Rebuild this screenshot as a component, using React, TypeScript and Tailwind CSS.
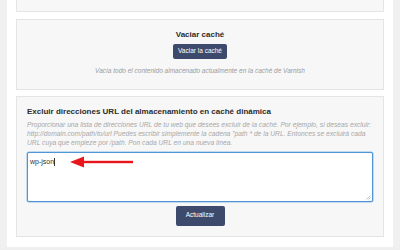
import React from "react";

const font = { fontFamily: '"Liberation Sans", Arial, sans-serif' };

function ArrowLeft() {
  return (
    <svg width="63" height="12" viewBox="0 0 63 12" className="shrink-0">
      <polygon points="0,6 14,0.5 14,11.5" fill="#e8161b" />
      <rect x="12" y="4.8" width="51" height="2.4" fill="#e8161b" />
    </svg>
  );
}

export default function App() {
  return (
    <div
      className="w-[400px] h-[250px] overflow-hidden bg-[#f0f0f1] px-[7px]"
      style={font}
    >
      <div className="bg-white px-[9px] pb-[10px] flex flex-col">
        {/* cut-off card above */}
        <div className="h-[12px] bg-[#f7f7f7] border border-t-0 border-[#e4e4e4]" />

        {/* Vaciar caché */}
        <div className="mt-[7px] h-[71px] bg-[#f7f7f7] border border-[#e4e4e4] flex flex-col items-center pt-[9px]">
          <h2 className="text-[8px] leading-[12px] font-bold text-[#2c2c2c]">Vaciar caché</h2>
          <button className="mt-[3px] h-[15px] px-[5px] rounded-[2px] bg-[#3e4a6b] text-white text-[6.5px] leading-none">
            Vaciar la caché
          </button>
          <p className="mt-[7px] text-[6.5px] italic text-[#9b9b9b]">
            Vacía todo el contenido almacenado actualmente en la caché de Varnish
          </p>
        </div>

        {/* Excluir direcciones */}
        <div className="mt-[6px] h-[141px] bg-[#f7f7f7] border border-[#e4e4e4] px-[10px] pt-[9px] flex flex-col">
          <h2 className="text-[8px] leading-[12px] font-bold text-[#2c2c2c]">
            Excluir direcciones URL del almacenamiento en caché dinámica
          </h2>
          <p className="mt-[2px] text-[6.7px] leading-[9.2px] italic text-[#a7a7a7] whitespace-nowrap">
            Proporcionar una lista de direcciones URL de tu web que desees excluir de la caché. Por ejemplo, si deseas excluir:
            <br />
            http://domain.com/path/to/url Puedes escribir simplemente la cadena "path * de la URL. Entonces se excluirá cada
            <br />
            URL cuya que empieze por /path. Pon cada URL en una nueva línea.
          </p>
          <div className="mt-[4px] h-[50px] bg-white border border-[#4f94d4] rounded-[2px] shadow-[0_0_0_0.5px_#8fbbe6] px-[2px] pt-[3px] relative">
            <div className="flex items-center gap-[15px]">
              <span className="text-[7px] text-[#333] leading-[10px]">
                wp-json<span className="inline-block w-px h-[8px] bg-[#333] align-middle" />
              </span>
              <ArrowLeft />
            </div>
            <svg width="5" height="5" viewBox="0 0 5 5" className="absolute right-[1px] bottom-[1px]">
              <path d="M4.5 0.5 L0.5 4.5 M4.5 2.5 L2.5 4.5" stroke="#999" strokeWidth="0.6" />
            </svg>
          </div>
          <div className="flex justify-center mt-[4px]">
            <button className="h-[20px] w-[49px] rounded-[2px] bg-[#3e4a6b] text-white text-[6.5px] leading-none">
              Actualizar
            </button>
          </div>
        </div>
      </div>
    </div>
  );
}
